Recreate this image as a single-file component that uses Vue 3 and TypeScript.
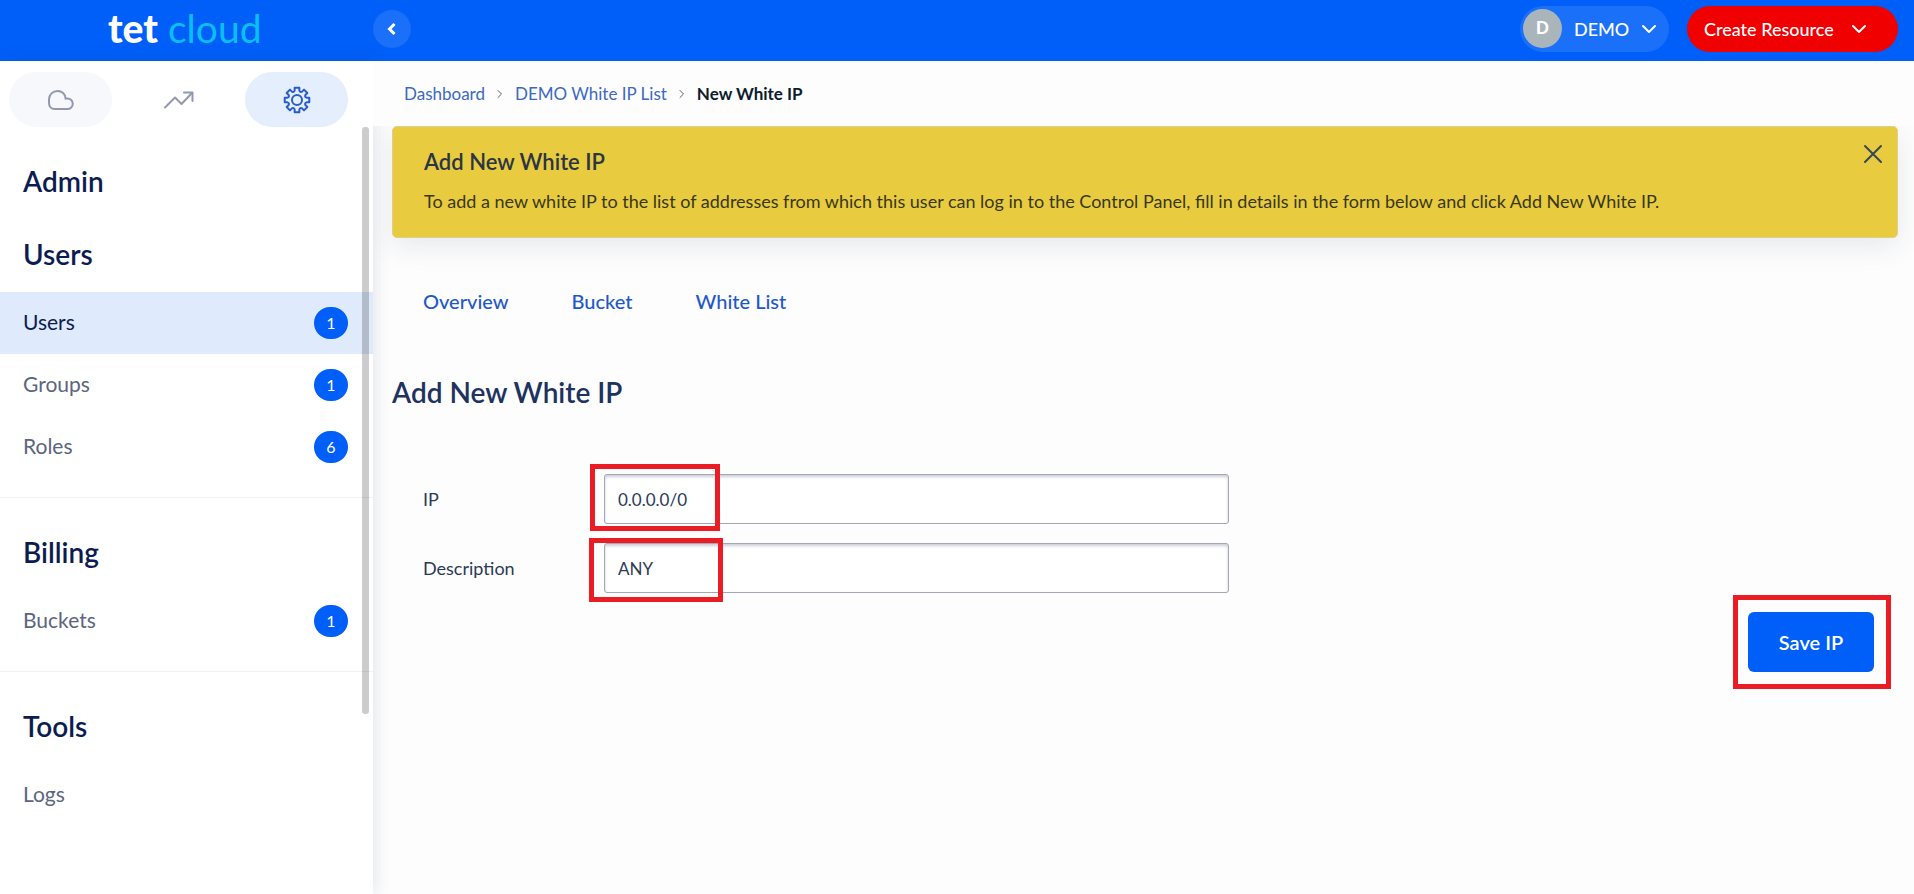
<script setup lang="ts">
import { ref } from 'vue'

interface NavItem {
  label: string
  count?: number
  active?: boolean
}

interface NavSection {
  title: string
  items: NavItem[]
}

const sections: NavSection[] = [
  {
    title: 'Users',
    items: [
      { label: 'Users', count: 1, active: true },
      { label: 'Groups', count: 1 },
      { label: 'Roles', count: 6 },
    ],
  },
  { title: 'Billing', items: [{ label: 'Buckets', count: 1 }] },
  { title: 'Tools', items: [{ label: 'Logs' }] },
]

const tabs: string[] = ['Overview', 'Bucket', 'White List']

const ip = ref('0.0.0.0/0')
const description = ref('ANY')
const noticeOpen = ref(true)

// Outline of an eight-toothed cog centred on 14,14.
function cogPath(): string {
  const point = (radius: number, angle: number): string =>
    `${(14 + radius * Math.cos(angle)).toFixed(2)} ${(14 + radius * Math.sin(angle)).toFixed(2)}`
  const step = Math.PI / 4
  let path = ''
  for (let i = 0; i < 8; i++) {
    const a = i * step
    path += `${i ? 'L' : 'M'}${point(9.8, a - 0.24)} L${point(12.5, a - 0.19)} L${point(12.5, a + 0.19)} L${point(9.8, a + 0.24)} `
    path += `Q${point(8, a + step / 2)} ${point(9.8, a + step - 0.24)} `
  }
  return path + 'Z'
}
const cog = cogPath()
</script>

<template>
  <div class="page">
    <header class="topbar">
      <div class="brand">
        <a class="logo" href="#"><span class="logo-tet">tet</span> <span class="logo-cloud">cloud</span></a>
      </div>
      <button class="collapse" type="button" aria-label="Collapse menu">
        <svg width="10" height="14" viewBox="0 0 10 14"><path d="M7.5 2 L2.5 7 L7.5 12" /></svg>
      </button>
      <div class="actions">
        <button class="account" type="button">
          <span class="avatar">D</span>
          <span>DEMO</span>
          <svg width="16" height="10" viewBox="0 0 16 10"><path d="M2 2 L8 8 L14 2" /></svg>
        </button>
        <button class="create" type="button">
          <span>Create Resource</span>
          <svg width="16" height="10" viewBox="0 0 16 10"><path d="M2 2 L8 8 L14 2" /></svg>
        </button>
      </div>
    </header>

    <div class="body">
      <aside class="sidebar">
        <div class="modes">
          <button class="mode mode-soft" type="button" aria-label="Cloud">
            <svg width="28" height="22" viewBox="0 0 28 22">
              <path d="M7.5 20 H20.5 A5.3 5.3 0 0 0 20.5 9.4 Q19.2 9.4 18.6 9.6 C18.4 5 14.8 2 10.6 2 C5.8 2 2 5.6 2 10.4 V14 C2 17.6 4.4 20 7.5 20 Z" />
            </svg>
          </button>
          <button class="mode" type="button" aria-label="Statistics">
            <svg width="32" height="20" viewBox="0 0 32 20">
              <path d="M2 17.5 L12 7.5 L18.5 14 L29 3" /><path d="M21 2.5 H29.5 V11" />
            </svg>
          </button>
          <button class="mode mode-active" type="button" aria-label="Settings">
            <svg width="28" height="28" viewBox="0 0 28 28">
              <path :d="cog" /><circle cx="14" cy="14" r="5" />
            </svg>
          </button>
        </div>
        <nav class="menu">
          <h2 class="menu-title">Admin</h2>
          <section v-for="section in sections" :key="section.title" class="group">
            <h2 class="group-title">{{ section.title }}</h2>
            <a v-for="item in section.items" :key="item.label" href="#" class="item" :class="{ active: item.active }">
              <span>{{ item.label }}</span>
              <span v-if="item.count" class="badge">{{ item.count }}</span>
            </a>
          </section>
          <div class="thumb"></div>
        </nav>
      </aside>

      <main class="content">
        <nav class="crumbs" aria-label="Breadcrumb">
          <a href="#">Dashboard</a>
          <svg width="6" height="10" viewBox="0 0 6 10"><path d="M1 1.5 L4.5 5 L1 8.5" /></svg>
          <a href="#">DEMO White IP List</a>
          <svg width="6" height="10" viewBox="0 0 6 10"><path d="M1 1.5 L4.5 5 L1 8.5" /></svg>
          <strong>New White IP</strong>
        </nav>

        <div v-if="noticeOpen" class="notice">
          <div>
            <h3>Add New White IP</h3>
            <p>To add a new white IP to the list of addresses from which this user can log in to the Control Panel, fill in details in the form below and click Add New White IP.</p>
          </div>
          <button class="close" type="button" aria-label="Close" @click="noticeOpen = false">
            <svg width="20" height="20" viewBox="0 0 20 20"><path d="M2 2 L18 18 M18 2 L2 18" /></svg>
          </button>
        </div>

        <nav class="tabs">
          <a v-for="tab in tabs" :key="tab" href="#">{{ tab }}</a>
        </nav>

        <h1>Add New White IP</h1>

        <form class="form" @submit.prevent>
          <div class="field">
            <label for="ip">IP</label>
            <div class="control">
              <input id="ip" v-model="ip" type="text" />
              <span class="mark mark-ip"></span>
            </div>
          </div>
          <div class="field">
            <label for="description">Description</label>
            <div class="control">
              <input id="description" v-model="description" type="text" />
              <span class="mark mark-description"></span>
            </div>
          </div>
          <div class="submit">
            <button class="save" type="submit">Save IP</button>
            <span class="mark mark-save"></span>
          </div>
        </form>
      </main>
    </div>
  </div>
</template>

<style>
body {
  background: #fdfdfd;
}
</style>

<style scoped>
* {
  box-sizing: border-box;
}

.page {
  display: flex;
  flex-direction: column;
  min-height: 100vh;
  font-family: Lato, "Open Sans", sans-serif;
  font-size: 17px;
  color: #2b3a55;
}

button {
  padding: 0;
  border: 0;
  font: inherit;
  background: none;
  cursor: pointer;
}

a {
  text-decoration: none;
}

svg {
  display: block;
  flex: none;
  fill: none;
  stroke: currentColor;
  stroke-width: 2;
  stroke-linecap: round;
  stroke-linejoin: round;
}

.topbar {
  display: flex;
  align-items: center;
  height: 61px;
  padding-right: 16px;
  padding-bottom: 4px;
  background: #005ff8;
  color: #fff;
}

.brand {
  flex: none;
  width: 373px;
  padding-bottom: 2px;
  padding-left: 108px;
}

.logo {
  font-size: 39px;
  line-height: 40px;
  color: #fff;
  white-space: nowrap;
}

.logo-tet {
  font-weight: 900;
}

.logo-cloud {
  color: #09bff2;
}

.collapse {
  display: grid;
  place-items: center;
  width: 38px;
  height: 38px;
  border-radius: 50%;
  background: #1a70f9;
  color: #fff;
}

.collapse svg {
  stroke-width: 3;
  stroke-linecap: butt;
  stroke-linejoin: miter;
}

.actions {
  display: flex;
  gap: 18px;
  margin-left: auto;
}

.account,
.create {
  display: flex;
  align-items: center;
  height: 46px;
  border-radius: 23px;
  font-size: 18px;
  font-weight: 500;
  color: #fff;
}

.account {
  gap: 12px;
  width: 149px;
  padding-left: 3px;
  background: #1a70f9;
}

.avatar {
  display: grid;
  place-items: center;
  width: 39px;
  height: 39px;
  border-radius: 50%;
  background: #a9b5bb;
  font-family: "Liberation Sans", sans-serif;
  font-size: 18px;
  font-weight: 700;
}

.create {
  gap: 17px;
  width: 211px;
  padding-left: 17px;
  background: #f00000;
}

.body {
  display: flex;
  flex: 1;
}

.sidebar {
  display: flex;
  flex: none;
  flex-direction: column;
  width: 373px;
  background: #fff;
  box-shadow: 2px 0 16px rgba(30, 50, 90, 0.12);
}

.modes {
  display: flex;
  justify-content: space-between;
  padding: 11px 25px 0 9px;
}

.mode {
  display: grid;
  place-items: center;
  width: 103px;
  height: 55px;
  border-radius: 28px;
  color: #9298ae;
}

.mode-soft {
  background: #f6f8fb;
}

.mode-active {
  background: #e4eefc;
  color: #2a5dc9;
}

.menu {
  position: relative;
  flex: 1;
}

.menu-title,
.group-title {
  margin: 0;
  padding: 36px 0 20px 23px;
  font-size: 28px;
  line-height: 36px;
  font-weight: 600;
  color: #0c1c50;
}

.menu-title {
  padding-bottom: 1px;
}

.group {
  padding-bottom: 19px;
}

.group + .group {
  border-top: 1px solid #f0f1f4;
}

.item {
  display: flex;
  align-items: center;
  justify-content: space-between;
  height: 62px;
  padding: 0 25px 0 23px;
  font-size: 21px;
  line-height: 24px;
  color: #5b6580;
}

.item > span:first-child {
  padding-bottom: 2px;
}

.item.active {
  background: #dfeafc;
  color: #0c1c50;
}

.badge {
  display: grid;
  place-items: center;
  width: 34px;
  height: 32px;
  border-radius: 16px;
  background: #005ff8;
  font-size: 16px;
  color: #fff;
}

.thumb {
  position: absolute;
  top: 0;
  right: 4px;
  width: 7px;
  height: 76.5%;
  border-radius: 3px;
  background: rgba(0, 0, 0, 0.2);
}

.content {
  flex: 1;
  min-width: 0;
  padding: 0 16px 0 19px;
}

.crumbs {
  position: relative;
  display: flex;
  align-items: center;
  gap: 12px;
  height: 65px;
  margin: 0 -16px 0 -19px;
  padding-left: 31px;
  background: #fdfdfd;
  font-size: 17px;
}

.crumbs a {
  color: #3b69c4;
}

.crumbs svg {
  stroke-width: 1;
  color: #555e70;
}

.crumbs strong {
  font-weight: 700;
  color: #0c1c2c;
}

.notice {
  display: flex;
  justify-content: space-between;
  min-height: 112px;
  padding: 17px 14px 19px 31px;
  border: 1px solid #dcd08a;
  border-radius: 5px;
  background: #e9cb3f;
  box-shadow: 0 8px 28px rgba(30, 50, 90, 0.1);
}

.notice h3 {
  margin: 0;
  font-size: 22px;
  line-height: 36px;
  font-weight: 600;
  color: #2b3544;
}

.notice p {
  margin: 6px 0 0;
  font-size: 18px;
  line-height: 30px;
  color: #383818;
}

.close {
  align-self: flex-start;
  color: #34475a;
}

.tabs {
  display: flex;
  gap: 63px;
  padding: 48px 31px 0;
  font-size: 20px;
  line-height: 30px;
  font-weight: 500;
}

.tabs a {
  color: #1d59c9;
}

h1 {
  margin: 58px 0 0;
  font-size: 28px;
  line-height: 36px;
  font-weight: 600;
  color: #20325f;
}

.form {
  padding: 64px 24px 0 31px;
}

.field {
  display: flex;
  align-items: center;
  margin-bottom: 19px;
}

.field label {
  flex: none;
  width: 181px;
  font-size: 18px;
}

.control {
  position: relative;
  flex: 0 1 625px;
}

.control input {
  display: block;
  width: 100%;
  height: 50px;
  padding: 0 13px;
  border: 1px solid #a3a6b4;
  border-radius: 3px;
  background: #fff;
  box-shadow: inset 0 2px 3px rgba(60, 60, 110, 0.25);
  font: inherit;
  color: #2b3a55;
}

.mark {
  position: absolute;
  border: 5px solid #ea1c24;
  pointer-events: none;
}

.mark-ip {
  top: -10px;
  left: -14px;
  width: 130px;
  height: 67px;
}

.mark-description {
  top: -5px;
  left: -15px;
  width: 134px;
  height: 64px;
}

.submit {
  position: relative;
  width: fit-content;
  margin-left: auto;
}

.save {
  width: 126px;
  height: 60px;
  border-radius: 6px;
  background: #005ff8;
  font-size: 20px;
  font-weight: 600;
  color: #fff;
}

.mark-save {
  top: -17px;
  left: -15px;
  width: 158px;
  height: 94px;
}
</style>
